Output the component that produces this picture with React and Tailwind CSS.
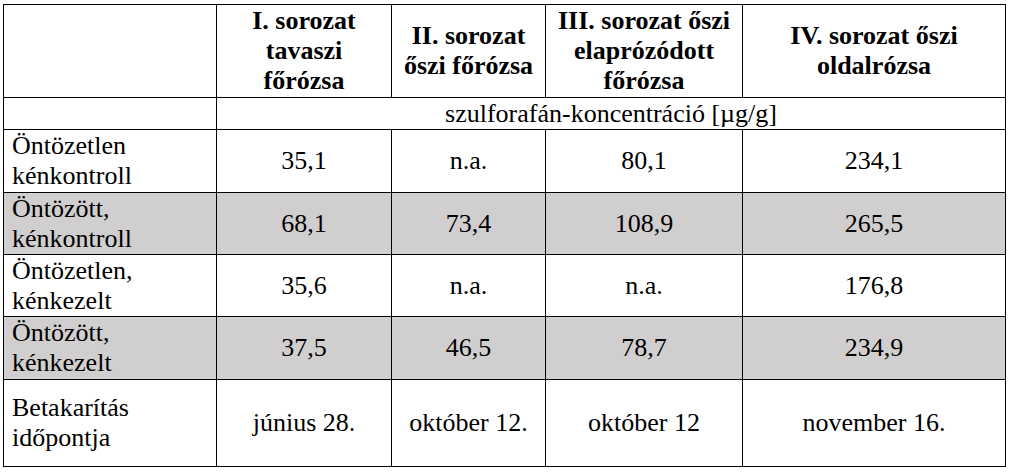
import React from 'react';

const rows = [
    { label: ['Öntözetlen', 'kénkontroll'], values: ['35,1', 'n.a.', '80,1', '234,1'], shaded: false, h: 'h-[63px]' },
    { label: ['Öntözött,', 'kénkontroll'], values: ['68,1', '73,4', '108,9', '265,5'], shaded: true, h: 'h-[62px]' },
    { label: ['Öntözetlen,', 'kénkezelt'], values: ['35,6', 'n.a.', 'n.a.', '176,8'], shaded: false, h: 'h-[62px]' },
    { label: ['Öntözött,', 'kénkezelt'], values: ['37,5', '46,5', '78,7', '234,9'], shaded: true, h: 'h-[63px]' },
    { label: ['Betakarítás', 'időpontja'], values: ['június 28.', 'október 12.', 'október 12', 'november 16.'], shaded: false, h: 'h-[87px]' },
];

const headers = [
    ['I. sorozat', 'tavaszi', 'főrózsa'],
    ['II. sorozat', 'őszi főrózsa'],
    ['III. sorozat őszi', 'elaprózódott', 'főrózsa'],
    ['IV. sorozat őszi', 'oldalrózsa'],
];

const cell = 'border border-black p-0 align-middle';

const App = () => {
    return (
        <div className="w-[1009px] h-[472px] bg-white pt-[4px] pl-[3px] font-['Liberation_Serif','Times_New_Roman',serif] text-[26px] leading-[30px] text-black">
            <table className="border-collapse table-fixed w-[1002px]">
                <colgroup>
                    <col className="w-[213px]" />
                    <col className="w-[175px]" />
                    <col className="w-[154px]" />
                    <col className="w-[197px]" />
                    <col className="w-[263px]" />
                </colgroup>
                <thead>
                    {/* Series headings */}
                    <tr className="h-[93px]">
                        <th className={cell}></th>
                        {headers.map((lines, i) => (
                            <th key={i} className={`${cell} text-center font-bold`}>
                                {lines.map((l, j) => <div key={j}>{l}</div>)}
                            </th>
                        ))}
                    </tr>
                    <tr className="h-[32px]">
                        <td className={cell}></td>
                        <td colSpan={4} className={`${cell} text-center`}>szulforafán-koncentráció [µg/g]</td>
                    </tr>
                </thead>
                <tbody>
                    {rows.map((row, i) => (
                        <tr key={i} className={`${row.h} ${row.shaded ? 'bg-[#d0cece]' : 'bg-white'}`}>
                            <td className={`${cell} pl-[8px] text-left`}>
                                {row.label.map((l, j) => <div key={j}>{l}</div>)}
                            </td>
                            {row.values.map((v, j) => (
                                <td key={j} className={`${cell} text-center`}>{v}</td>
                            ))}
                        </tr>
                    ))}
                </tbody>
            </table>
        </div>
    );
};

export default App;
